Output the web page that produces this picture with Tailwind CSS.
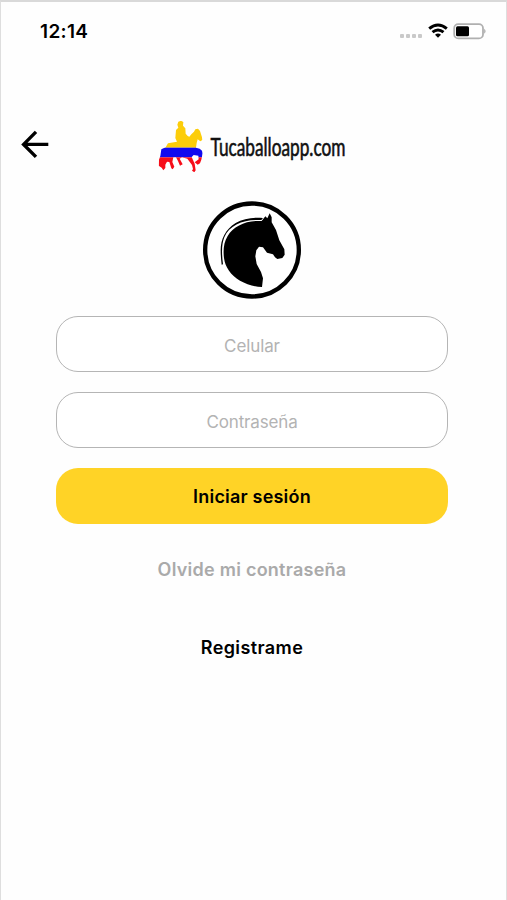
<!DOCTYPE html>
<html lang="es">
<head>
<meta charset="utf-8">
<title>Tucaballoapp.com</title>
<script src="https://cdn.jsdelivr.net/npm/@tailwindcss/browser@4"></script>
</head>
<body class="bg-white">
<div class="w-[507px] h-[900px] overflow-hidden bg-[#fefefe] border-t-2 border-l border-r border-t-[#d9d9d9] border-l-[#dedede] border-r-[#dedede] font-['Inter','Liberation_Sans',sans-serif] text-black">
  <header class="h-[110px] pt-[15px] pl-[39px] pr-[17px] flex justify-between items-start">
    <span class="text-[19px] leading-[29px] font-semibold tracking-[0.350px]">12:14</span>
    <svg class="w-[90px] h-[29px]" viewBox="0 0 90 29">
      <g fill="#c9c9c9"><rect x="1" y="17" width="4" height="4" rx="1"/><rect x="7" y="17" width="4" height="4" rx="1"/><rect x="13" y="17" width="4" height="4" rx="1"/><rect x="19" y="17" width="4" height="4" rx="1"/></g>
      <g fill="none" stroke="#000" stroke-width="2.900"><path d="M30.200 11.700Q39 4.200 47.800 11.700"/><path d="M33.500 15.200Q39 10.600 44.500 15.200"/></g>
      <path d="M36 17.700Q39 15.300 42 17.700L39 20.800Z"/>
      <rect x="55.200" y="7.200" width="28.800" height="14.200" rx="4" fill="#fff" stroke="#b0b0b0" stroke-width="1.800"/>
      <rect x="57" y="9.300" width="13" height="10" rx="1.500"/>
      <path d="M85.200 11.800Q88 14.300 85.200 16.800Z" fill="#aaa"/>
    </svg>
  </header>
  <div class="h-[66px] flex">
    <svg class="w-[149px] h-[66px] shrink-0" viewBox="1 112 149 66" fill="none" stroke="#000" stroke-width="3.400"><path d="M48.300 144.400H24M36 131.900L23.600 144.400L36 156.900"/></svg>
    <svg class="w-[60px] h-[66px] shrink-0" viewBox="0 0 180 198">
      <defs><clipPath id="rider"><path d="M85 29L93 26L100 30L99 41L106 49L107 65L113 72L118 74L124 67L132 59L136 52L144 50L150 57L156 76L157 84L151 88L143 82L140 93L138 107L149 110L156 116L158 124L154 143L150 154L143 158L134 151L146 142L145 131L131 129L125 135L134 155L137 175L133 181L126 176L129 171L126 159L112 140L96 136L89 140L98 157L90 161L84 147L78 136L70 136L67 150L73 164L68 172L64 169L58 150L51 149L46 158L46 168L40 175L35 167L26 161L27 143L31 132L34 112L47 106L54 94L81 89L76 78L78 54L85 47L82 38Z"/></clipPath></defs>
      <g clip-path="url(#rider)"><rect width="180" height="107" fill="#fccd0a"/><rect y="107" width="180" height="29" fill="#1009ef"/><rect y="136" width="180" height="62" fill="#f60d19"/></g>
    </svg>
    <svg class="w-[240px] h-[66px] shrink-0 overflow-visible" viewBox="210 112 240 66"><text x="210.500" y="156" textLength="135" lengthAdjust="spacingAndGlyphs" fill="#111" stroke="#111" stroke-width="0.600" class="font-['Lato'] text-[24.500px] font-normal">Tucaballoapp.com</text></svg>
  </div>
  <svg class="block w-[112px] h-[110px] ml-[194px] mt-[17px]" viewBox="0 0 336 330">
    <ellipse cx="171" cy="165" rx="140.500" ry="139.500" fill="#fff" stroke="#000" stroke-width="13"/>
    <path d="M200 78L211 64L217 70L224 55L230 67L230 82L243 105L253 136L268 163L269 179L262 189L247 192L240 187L234 178L216 173L204 157L192 155L184 166L181 184L185 207L198 231L204 250L201 276C176 276 154 267 135 257C107 241 90 215 87 189C84 165 86 143 98 123C116 92 155 75 200 78Z"/>
    <path d="M204 69C176 66 145 70 122 84C91 103 77 133 77 166Q77 185 80 209L84 208C80 177 79 149 88 127C104 88 149 72 199 75Z"/>
  </svg>
  <form class="ml-[55px] mt-[11px] w-[392px] flex flex-col gap-[20px]">
    <div class="h-14 rounded-[22px] border-[1.500px] border-[#b5b5b5] bg-white flex items-center justify-center pt-[5px] text-[17px] text-[#b3b3b3]"><span class="tracking-[-0.100px]">Celular</span></div>
    <div class="h-14 rounded-[22px] border-[1.500px] border-[#b5b5b5] bg-white flex items-center justify-center pt-[5px] text-[17px] text-[#b3b3b3]"><span class="tracking-[-0.150px]">Contraseña</span></div>
    <button type="button" class="h-14 rounded-[22px] bg-[#ffd326] flex items-center justify-center pt-px text-[18px] font-semibold tracking-[0.200px]"><span>Iniciar sesión</span></button>
  </form>
  <div class="w-[502px] flex flex-col items-center text-[18px] leading-[24px] font-semibold tracking-[0.250px]">
    <a class="mt-[34px] text-[#aaa]">Olvide mi contraseña</a>
    <a class="mt-[54px] tracking-[0.400px]">Registrame</a>
  </div>
</div>
</body>
</html>
